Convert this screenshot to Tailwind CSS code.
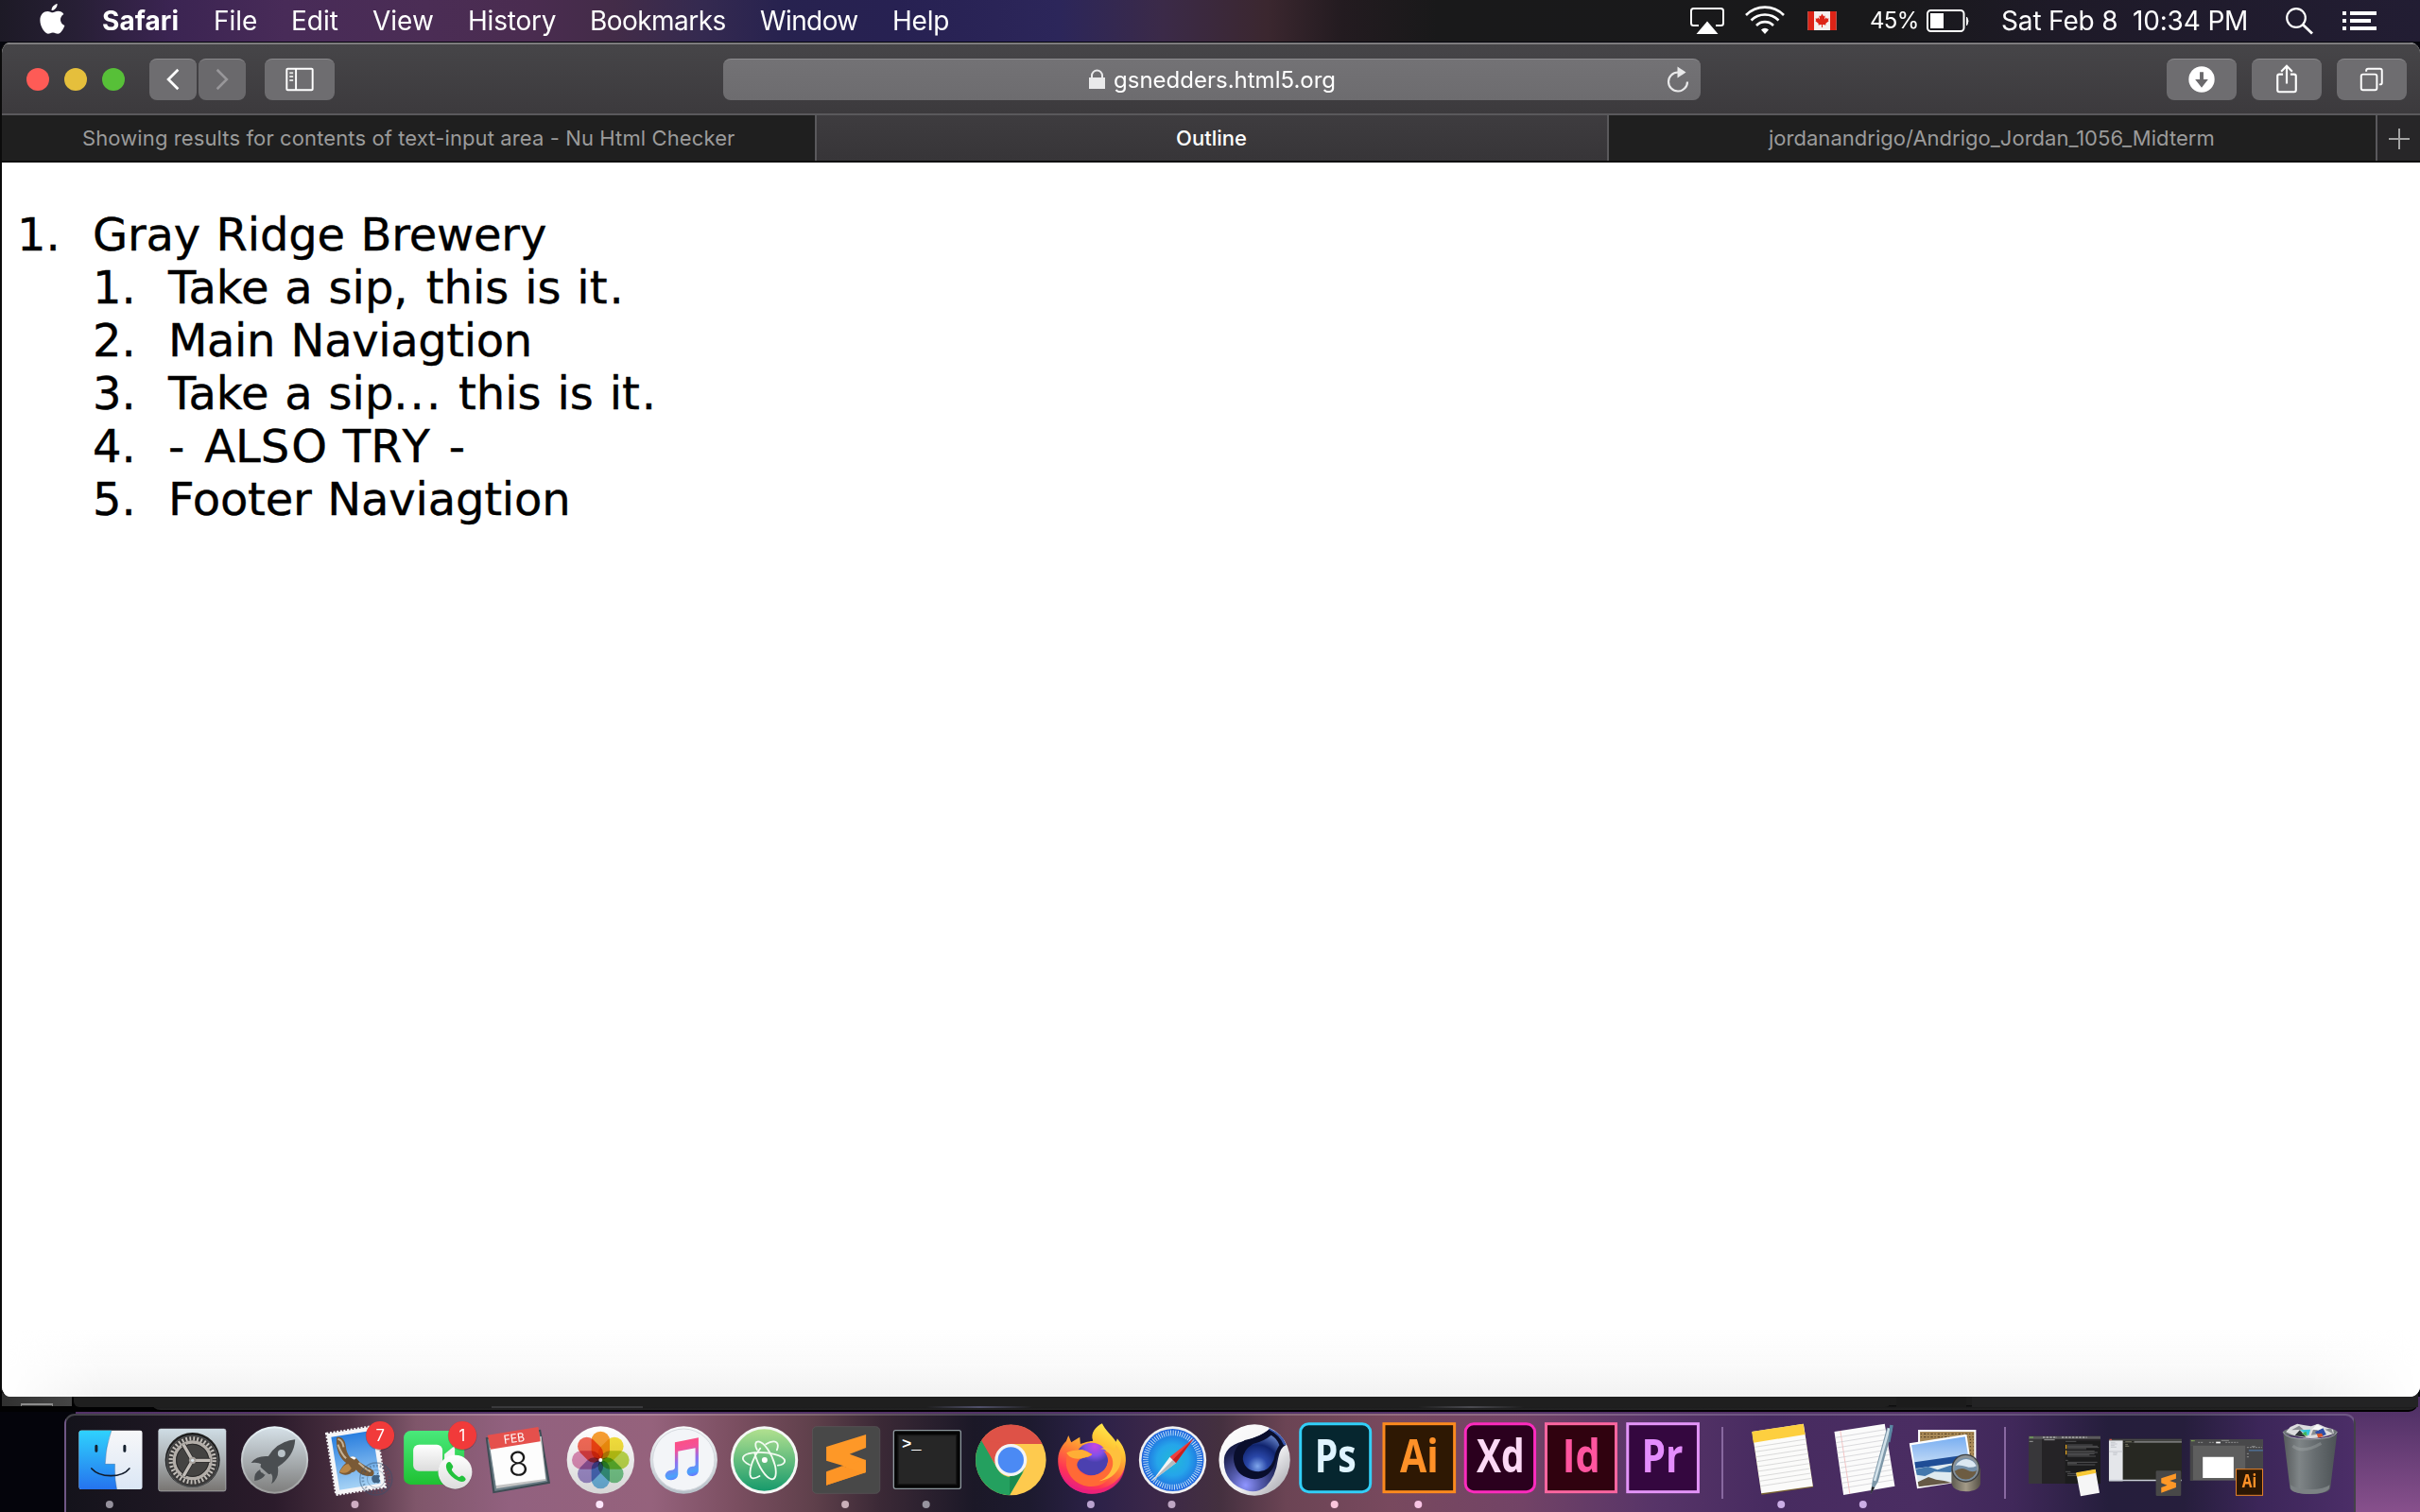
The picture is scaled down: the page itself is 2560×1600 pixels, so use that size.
<!DOCTYPE html>
<html lang="en">
<head>
<meta charset="utf-8">
<title>Outline</title>
<script src="https://cdn.jsdelivr.net/npm/@tailwindcss/browser@4"></script>
</head>
<body class="w-[2560px] h-[1600px] overflow-hidden bg-[#05050c] font-['Inter',sans-serif]">
<div class="relative flex h-[1600px] w-[2560px] flex-col">

  <!-- Menu bar -->
  <header class="flex h-11 shrink-0 items-center whitespace-pre bg-[linear-gradient(90deg,#1d1a26_0px,#271f35_80px,#3b2452_180px,#482b58_300px,#4b2d55_450px,#4a2c50_560px,#432c48_650px,#352a50_740px,#27224f_830px,#272152_950px,#2c265a_1120px,#3b2a48_1230px,#3b272f_1340px,#231b20_1420px,#19191a_1520px,#19191b_2000px,#1e1a28_2180px,#221d33_2560px)] text-[28px] leading-11 text-white">
    <svg class="ml-[42px] h-8 w-[27px] shrink-0 -mt-1" viewBox="0 0 27 32" fill="#fff"><path d="M18.6 0c.3 3.300-2.700 7-6 7.100C12.200 4 15.300.5 18.600 0zM13.800 9.300c1.300 0 3.200-1.500 5.700-1.500 2.300 0 4.600 1.200 5.900 3.100-5.100 3.100-4.200 9.900 1 12-1.300 3.900-4.200 8.800-7.200 8.800-2.100 0-2.800-1.300-5.200-1.300-2.500 0-3.300 1.300-5.200 1.300C5.300 31.700.4 23.800.4 17.500.4 11 4.500 7.900 8.300 7.900c2.400 0 4.200 1.400 5.500 1.400z"/></svg>
    <span class="ml-[39px] w-[118px] font-bold tracking-[0.1px]">Safari</span>
    <span class="w-[82px]">File</span>
    <span class="w-[86px]">Edit</span>
    <span class="w-[101px]">View</span>
    <span class="w-[129px] tracking-[-0.2px]">History</span>
    <span class="w-[180px] tracking-[-0.55px]">Bookmarks</span>
    <span class="w-[140px] tracking-[-0.6px]">Window</span>
    <span class="w-[60px] tracking-[-0.2px]">Help</span>
    <svg class="ml-auto h-11 w-[160px] shrink-0" viewBox="1785 0 160 44">
      <path d="M1797 27h-5.500a2.500 2.500 0 0 1-2.500-2.500v-13a2.500 2.500 0 0 1 2.500-2.500h29a2.500 2.500 0 0 1 2.500 2.500v13a2.500 2.500 0 0 1-2.500 2.500h-5.500" fill="none" stroke="#fff" stroke-width="2"/>
      <path d="M1806 22.500l11.500 13.500h-23z" fill="#fff"/>
      <g fill="none" stroke="#fff" stroke-width="2.600"><path d="M1847 16a28 28 0 0 1 40 0M1852.500 21.500a20.500 20.500 0 0 1 29 0M1858 27a12.500 12.500 0 0 1 18 0"/></g>
      <path d="M1867 36l-4-4.500a5.500 5.500 0 0 1 8 0z" fill="#fff"/>
      <path d="M1912.500 12h30v20h-30z" fill="#f4f0ef"/><path d="M1912.500 12h6.500v20h-6.500zM1936 12h6.500v20h-6.500z" fill="#dd2417"/>
      <path d="M1927.500 14.500l1.600 2.700 1.600-.7-.7 4 1.900-1.900.6 1.100 2.100-.3-.8 2 1 .6-3.600 3.100.4 1.300-3.600-.4v3h-1v-3l-3.600.4.4-1.300-3.600-3.100 1-.6-.8-2 2.100.3.600-1.100 1.900 1.900-.7-4 1.600.7z" fill="#dd2417"/>
    </svg>
    <span class="ml-[33px] w-[59px] text-[24px] tracking-[-0.7px]">45%</span>
    <svg class="h-11 w-[48px] shrink-0" viewBox="2037 0 48 44"><rect x="2039" y="11" width="38.500" height="22" rx="3.500" fill="none" stroke="#fff" stroke-width="2"/><path d="M2042 14h14v16h-14z" fill="#fff"/><path d="M2080.500 18q3 4 0 9z" fill="#fff" stroke="#fff"/></svg>
    <span class="ml-[32px] w-[299px] tracking-[-0.15px]">Sat Feb 8  10:34 PM</span>
    <svg class="mr-[44px] h-11 w-[100px] shrink-0" viewBox="2416 0 100 44"><circle cx="2429" cy="19" r="9.800" fill="none" stroke="#fff" stroke-width="2.200"/><path d="M2436 26l10 9.500" stroke="#fff" stroke-width="2.800"/><path d="M2478 12h4v4h-4zM2478 20h4v4h-4zM2478 28h4v4h-4zM2486 12h28v4h-28zM2486 20h22v4h-22zM2486 28h28v4h-28z" fill="#fff"/></svg>
  </header>

  <!-- Browser window -->
  <section class="relative z-10 mt-px flex h-[1433px] w-[2560px] shrink-0 flex-col overflow-hidden rounded-[11px] border-l-2 border-[#0b0b0b] bg-white">
    <div class="flex h-[77px] shrink-0 items-center border-t-2 border-b-2 border-t-[#7d7c7e] border-b-[#5a595c] bg-linear-to-b from-[#464548] to-[#3c3a3d]">
      <div class="ml-[26px] flex gap-4">
        <i class="size-6 rounded-full bg-[#fe5b56]"></i><i class="size-6 rounded-full bg-[#e5bf3c]"></i><i class="size-6 rounded-full bg-[#57c038]"></i>
      </div>
      <div class="ml-[26px] flex gap-0.5">
        <svg class="h-11 w-[50px] rounded-lg border-t border-[#8a898c] bg-[#6e6d70]" viewBox="0 0 50 44"><path d="M30.500 11L20 21.500 30.500 32" fill="none" stroke="#fff" stroke-width="2.800"/></svg>
        <svg class="h-11 w-[50px] rounded-lg border-t border-[#8a898c] bg-[#6a696c]" viewBox="0 0 50 44"><path d="M19.500 11L30 21.500 19.500 32" fill="none" stroke="#98979a" stroke-width="2.600"/></svg>
      </div>
      <svg class="ml-5 h-11 w-[74px] rounded-lg border-t border-[#8a898c] bg-[#6e6d70]" viewBox="0 0 74 44"><g fill="none" stroke="#fff" stroke-width="2"><rect x="23" y="10" width="28" height="23" rx="1"/><path d="M33 10v23"/></g><path d="M26 14.500h4M26 18.500h4M26 22.500h4" stroke="#ddd" stroke-width="2"/></svg>
      <div class="ml-[411px] flex h-11 w-[1034px] items-center rounded-lg border-t border-[#8c8b8e] bg-linear-to-b from-[#737275] to-[#6d6c6f] text-[24px] text-white">
        <svg class="ml-[387px] h-6 w-[26px]" viewBox="0 0 26 24"><path d="M0 10h17v12H0z" fill="#e9e9ea"/><path d="M3 11V8a5.500 5.500 0 0 1 11 0v3" fill="none" stroke="#e9e9ea" stroke-width="2"/></svg>
        <span class="w-[240px] pt-0.5">gsnedders.html5.org</span>
        <svg class="ml-auto mr-[10px] h-8 w-7" viewBox="0 0 28 32"><path d="M14 8.500A10 10 0 1 0 24 18.500" fill="none" stroke="#e9e9ea" stroke-width="2.200"/><path d="M13.500 2.500v12l9-6z" fill="#e9e9ea"/></svg>
      </div>
      <div class="ml-auto mr-3.5 flex gap-4">
        <svg class="h-11 w-[74px] rounded-lg border-t border-[#8a898c] bg-[#6e6d70]" viewBox="0 0 74 44"><circle cx="37" cy="21.500" r="14" fill="#fff"/><path d="M35 13.500h4v8h5l-7 9-7-9h5z" fill="#6a696c"/></svg>
        <svg class="h-11 w-[74px] rounded-lg border-t border-[#8a898c] bg-[#6e6d70]" viewBox="0 0 74 44"><g fill="none" stroke="#fff" stroke-width="2.200"><path d="M33 16h-4a2 2 0 0 0-2 2v15a2 2 0 0 0 2 2h16a2 2 0 0 0 2-2v-15a2 2 0 0 0-2-2h-4M37 26V7M31 13l6-6 6 6"/></g></svg>
        <svg class="h-11 w-[74px] rounded-lg border-t border-[#8a898c] bg-[#6e6d70]" viewBox="0 0 74 44"><g fill="none" stroke="#fff" stroke-width="2"><rect x="25.500" y="16" width="17" height="17" rx="2"/><path d="M31 13v-1a2 2 0 0 1 2-2h13a2 2 0 0 1 2 2v13a2 2 0 0 1-2 2h-1"/></g></svg>
      </div>
    </div>
    <div class="flex h-[50px] shrink-0 border-b-2 border-[#0c0c0c] text-[22px] text-[#9b9b9b] leading-[48px]">
      <div class="w-[860px] bg-[#1f1f1f] pl-[85px] tracking-[0.11px]">Showing results for contents of text-input area - Nu Html Checker</div>
      <div class="flex w-[840px] justify-center border-x-2 border-[#5a595c] bg-linear-to-b from-[#3e3c3f] to-[#373538] pr-px font-medium text-white">Outline</div>
      <div class="w-[811px] bg-[#1f1f1f] pl-[169px] tracking-[0.02px]">jordanandrigo/Andrigo_Jordan_1056_Midterm</div>
      <svg class="w-[47px] border-l-2 border-[#5a595c] bg-[#272628]" viewBox="0 0 45 48"><path d="M23 14v22M12 25h22" stroke="#a3a3a3" stroke-width="2"/></svg>
    </div>
    <main class="h-[1256px] grow bg-white pt-12 pl-4 font-['DejaVu_Sans',sans-serif] text-[48px] leading-[56px] text-black [word-spacing:1.6px] [-webkit-text-stroke:0.4px_black]">
      <ol>
        <li class="flex"><span class="w-20 shrink-0">1.</span><div><span class="tracking-[-0.2px]">Gray Ridge Brewery</span>
          <ol>
            <li class="flex"><span class="w-20">1.</span><span>Take a sip<span class="tracking-[2.200px]">,</span> this is it<span class="pl-0.5">.</span></span></li>
            <li class="flex"><span class="w-20">2.</span><span class="tracking-[-0.37px]">Main Naviagtion</span></li>
            <li class="flex"><span class="w-20">3.</span><span>Take a sip<span class="tracking-[2px]">...</span> this is it<span class="pl-0.5">.</span></span></li>
            <li class="flex"><span class="w-20">4.</span><span><span class="tracking-[4px]">-</span> AL<span class="tracking-[2px]">S</span>O TR<span class="tracking-[2px]">Y</span> <span class="pl-px">-</span></span></li>
            <li class="flex"><span class="w-20">5.</span><span class="tracking-[-0.18px]">Footer Naviagtion</span></li>
          </ol></div></li>
      </ol>
    </main>
    <div class="absolute inset-x-0 bottom-0 h-[72px] bg-[linear-gradient(180deg,#ffffff00,#fafafa_55%,#f2f2f2)] [mask-image:linear-gradient(90deg,transparent,black_110px,black_2440px,transparent)]"></div>
  </section>

  <!-- Desktop area with the Dock -->
  <footer class="relative h-[122px] bg-[linear-gradient(180deg,#4a2d62,#87508c)]">
    <div class="absolute left-0 -top-3 h-[134px] w-20 bg-[#04040b]"></div>
    <div class="absolute left-0 -top-3 h-7 w-[2480px] bg-[#020203]"></div>
    <div class="absolute left-[160px] -top-3 h-7 w-[2398px] rounded-b-[10px] border-b-2 border-black bg-[linear-gradient(180deg,#1f1f1f_80%,#0c0c0d_82%,#1d1d1e_90%,#262626)]"></div>
    <div class="absolute left-[78px] -top-3 h-[23px] w-[1922px] rounded-b-[6px] bg-[#1f1f1f]"></div>
    <div class="absolute left-[2006px] -top-3 h-[23px] w-[74px] bg-[#1c1c1c]"></div>
    <div class="absolute left-[2086px] -top-3 h-[23px] w-[472px] bg-[#232324]"></div>
    <div class="absolute left-0.5 -top-3 h-[22px] w-[74px] bg-linear-to-r from-[#303030] to-[#454545]"></div>
    <div class="absolute left-[22px] top-[7px] h-[3px] w-[34px] border-x border-t-2 border-[#8b8b8b]"></div>
    <div class="absolute left-[520px] top-[10px] h-0.5 w-40 bg-[#39393c]"></div>
    <div class="absolute left-[980px] top-[10px] h-0.5 w-28 bg-[linear-gradient(90deg,transparent,#50506a,transparent)]"></div>
    <div class="absolute left-[1500px] top-[10px] h-0.5 w-28 bg-[linear-gradient(90deg,transparent,#4a4a50,transparent)]"></div>

    <div class="absolute left-[68px] top-[18px] flex h-[116px] w-[2424px] items-start rounded-[11px] border-2 border-white/20 bg-[linear-gradient(90deg,#14131b_0px,#1d1722_100px,#2b1b2b_220px,#4b3041_300px,#7f566a_370px,#92617f_470px,#95627c_620px,#7a4e60_710px,#5f404b_790px,#3b2936_860px,#1b1827_960px,#1d1a2f_1020px,#2c2148_1090px,#3b2749_1150px,#44303f_1220px,#6b4454_1290px,#78495e_1400px,#724366_1540px,#573468_1680px,#472b60_1800px,#4a2d62_1960px,#40285a_2060px,#251e3c_2160px,#261e3c_2240px,#3c2659_2320px,#4c2e68_2424px)] pl-[4.300px] [&>svg]:-mt-0.5 [&>svg]:h-[104px] [&>svg]:w-[86.4px] [&>svg]:shrink-0">
      <!-- Finder -->
      <svg viewBox="222.400 108 259.200 312">
        <defs><linearGradient id="fb" x2="0" y2="1"><stop stop-color="#2fd2fd"/><stop offset="1" stop-color="#2573ee"/></linearGradient><linearGradient id="fw" x2="0" y2="1"><stop stop-color="#f7f7f9"/><stop offset="1" stop-color="#dbe7f5"/></linearGradient></defs>
        <rect x="251" y="161" width="201" height="187" rx="7" fill="url(#fw)"/><path d="M258 161h96q-19 55-20 107h31q-2 45 6 80H258a7 7 0 0 1-7-7V168a7 7 0 0 1 7-7z" fill="url(#fb)"/>
        <path d="M354 161q-19 55-20 107h31q-2 45 6 80" fill="none" stroke="#1b4f86" stroke-opacity=".5" stroke-width="2"/>
        <path d="M306 211v15M396 211v15" stroke="#14202e" stroke-width="9" stroke-linecap="round"/><path d="M291 282q20 23 61 23t59-23" fill="none" stroke="#111b2a" stroke-width="5" stroke-linecap="round"/>
        <circle cx="348" cy="396" r="12" fill="#95919c"/>
      </svg>
      <!-- System Preferences -->
      <svg viewBox="482 108 259.200 312">
        <defs><linearGradient id="sg" x2="0" y2="1"><stop stop-color="#cfdde5"/><stop offset=".5" stop-color="#a9aeb1"/><stop offset="1" stop-color="#777471"/></linearGradient></defs>
        <rect x="502" y="156" width="214" height="198" rx="7" fill="url(#sg)" stroke="#d5dde0" stroke-width="1.500"/>
        <circle cx="610" cy="255" r="87" fill="#1d1d1d"/><circle cx="610" cy="259" r="82" fill="#3b3a3a" stroke="#b9cad6" stroke-width="2" stroke-opacity=".4"/>
        <circle cx="610" cy="256" r="69" fill="none" stroke="#c4c0bb" stroke-width="13" stroke-dasharray="5.500 6.540"/>
        <circle cx="610" cy="256" r="58" fill="#444342" stroke="#b3aea9" stroke-width="10"/><circle cx="610" cy="256" r="51" fill="none" stroke="#2a2929" stroke-width="3"/>
        <path d="M610 256h56M610 256l-29-50M610 256l-29 50" stroke="#2e2d2d" stroke-width="15"/>
        <path d="M610 256h56M610 256l-29-50M610 256l-29 50" stroke="#c1bcb7" stroke-width="10"/><circle cx="610" cy="256" r="11" fill="#aaa5a0"/><circle cx="610" cy="256" r="5" fill="#d8e2e8"/>
      </svg>
      <!-- Launchpad -->
      <svg viewBox="741.400 108 259.200 312">
        <defs><linearGradient id="lg" x2="0" y2="1"><stop stop-color="#d4dfe6"/><stop offset="1" stop-color="#7f7f7e"/></linearGradient><linearGradient id="lr" x2="0" y2="1"><stop stop-color="#e8f3f8"/><stop offset="1" stop-color="#9b9b9b"/></linearGradient></defs>
        <circle cx="872" cy="255" r="107" fill="url(#lr)"/><circle cx="872" cy="255" r="101" fill="url(#lg)"/>
        <path d="M937 190q-56 5-85 53-38-3-55 21 22-3 32 4-3 7-1 10l24 21q6 2 9-1 8 12 1 33 26-20 20-54 53-34 55-87z" fill="#4a4e51"/><circle cx="894" cy="234" r="12" fill="#b9c3c8"/>
        <path d="M826 285q-20 9-18 36 25-3 35-20-7 1-8-5-9 0-9-11z" fill="#4a4e51"/>
      </svg>
      <!-- Mail -->
      <svg viewBox="1000.600 108 259.200 312">
        <defs><linearGradient id="mg" x2="0" y2="1"><stop stop-color="#2a7fdf"/><stop offset="1" stop-color="#a5d2f5"/></linearGradient></defs>
        <g transform="rotate(-9 1130 255)"><rect x="1052" y="158" width="158" height="196" fill="#f5f5f7"/><rect x="1052" y="158" width="158" height="196" fill="none" stroke="#f5f5f7" stroke-width="8" stroke-dasharray="6 5"/><rect x="1065" y="171" width="132" height="170" fill="url(#mg)"/></g>
        <path d="M1070 183c14-6 27 8 29 28 1 15 6 25 13 35 10-4 20-1 26 10 12 14 30 20 47 31 6 8 4 16-3 19-19 2-39-4-50-20-5 6-9 9-14 8-9 10-28 11-40 1 5-14 15-26 22-31-22-18-33-43-30-81z" fill="#7a5a36"/>
        <path d="M1074 188c9 2 16 12 18 26M1074 206q12 32 26 44M1140 264q18 18 38 28" fill="none" stroke="#c4b296" stroke-width="6"/><path d="M1112 246q12-6 20 3l-6 5z" fill="#fff"/><path d="M1079 293q12-24 28-26l10 14q-14 22-38 12z" fill="#b98748"/>
        <g fill="none" stroke="#34506e" stroke-opacity=".45"><circle cx="1195" cy="315" r="51" stroke-width="4"/><circle cx="1195" cy="315" r="42" stroke-width="8" stroke-dasharray="5 6"/><circle cx="1195" cy="315" r="28" stroke-width="2.500"/></g>
        <path d="M1197 302q1-6 6-7 0 6-6 7zM1195 304c4-2 10-2 13 2-6 4-5 11 1 14-5 10-8 9-14 7-7 3-10 0-13-8-3-11 4-18 13-15z" fill="#2a4866" fill-opacity=".8"/>
        <circle cx="1208" cy="179" r="46" fill="#000" fill-opacity=".2"/><circle cx="1208" cy="177" r="45" fill="#f13a3a"/><text x="1208" y="195" text-anchor="middle" font-family="Inter" font-size="50" fill="#fff">7</text>
        <circle cx="1128" cy="396" r="12" fill="#cfaec3"/>
      </svg>
      <!-- FaceTime -->
      <svg viewBox="59.600 108 259.200 312">
        <defs><linearGradient id="vg" x2="0" y2="1"><stop stop-color="#49e97b"/><stop offset="1" stop-color="#1fc132"/></linearGradient><linearGradient id="vw" x2="0" y2="1"><stop stop-color="#fff"/><stop offset="1" stop-color="#dcdcdc"/></linearGradient></defs>
        <rect x="81" y="162" width="192" height="171" rx="22" fill="url(#vg)"/><rect x="111" y="206" width="93" height="84" rx="18" fill="url(#vw)"/><path d="M210 236l33-27v76l-33-27z" fill="#f5f5f5"/>
        <circle cx="244" cy="295" r="54" fill="#000" fill-opacity=".25"/><circle cx="244" cy="293" r="54" fill="url(#vw)"/>
        <path d="M219 264q7-6 12 1l6 9q2 5-3 9-2 3 1 7 8 11 19 18 4 2 7-1 4-4 9-1l6 6q4 5-1 9-8 6-19 1-27-12-38-35-6-15 1-23z" fill="#23c23c"/>
        <circle cx="267" cy="179" r="46" fill="#000" fill-opacity=".2"/><circle cx="267" cy="177" r="45" fill="#f13a3a"/><text x="266" y="195" text-anchor="middle" font-family="Inter" font-size="50" fill="#fff">1</text>
      </svg>
      <!-- Calendar -->
      <svg viewBox="318.800 108 259.200 312">
        <path d="M342 184l175-26 30 171-182 32z" fill="#3e4c54"/><path d="M348 190l165-24 26 158-168 30z" fill="#6d7f88"/><path d="M356 200l163-20 15 140-158 26z" fill="#c4c4c4"/>
        <path d="M356 216l160-25 16 124-157 21z" fill="#fdfdfd"/><path d="M348 176l161-26 7 46-158 25z" fill="#e5504c"/>
        <g transform="rotate(-8 435 190)"><text x="433" y="199" text-anchor="middle" font-family="Inter" font-size="38" textLength="66" lengthAdjust="spacingAndGlyphs" fill="#fff">FEB</text></g>
        <g transform="rotate(-4 445 265)"><text x="445" y="305" text-anchor="middle" font-family="Inter" font-weight="300" font-size="106" fill="#191919">8</text></g>
      </svg>
      <!-- Photos -->
      <svg viewBox="578 108 259.200 312">
        <defs><linearGradient id="pg" x2="0" y2="1"><stop stop-color="#fff"/><stop offset="1" stop-color="#d6d6d6"/></linearGradient></defs>
        <circle cx="705" cy="255" r="107" fill="url(#pg)"/>
        <g class="[&>rect]:mix-blend-multiply">
          <rect x="676" y="164" width="58" height="91" rx="29" fill="#faa033"/>
          <rect x="676" y="164" width="58" height="91" rx="29" fill="#f6e13c" transform="rotate(45 705 255)"/>
          <rect x="676" y="164" width="58" height="91" rx="29" fill="#bfdb4e" transform="rotate(90 705 255)"/>
          <rect x="676" y="164" width="58" height="91" rx="29" fill="#78cb8c" transform="rotate(135 705 255)"/>
          <rect x="676" y="164" width="58" height="91" rx="29" fill="#72bbe6" transform="rotate(180 705 255)"/>
          <rect x="676" y="164" width="58" height="91" rx="29" fill="#a290cf" transform="rotate(225 705 255)"/>
          <rect x="676" y="164" width="58" height="91" rx="29" fill="#e08fb9" transform="rotate(270 705 255)"/>
          <rect x="676" y="164" width="58" height="91" rx="29" fill="#f46a57" transform="rotate(315 705 255)"/>
        </g><circle cx="705" cy="255" r="6" fill="#fff"/>
        <circle cx="702" cy="396" r="12" fill="#fde6fb"/>
      </svg>
      <!-- Music -->
      <svg viewBox="837.200 108 259.200 312">
        <defs><linearGradient id="ug" x2="0" y2="1"><stop stop-color="#f9fafb"/><stop offset="1" stop-color="#b6bfc7"/></linearGradient><linearGradient id="un" x1=".4" y1="0" x2=".6" y2="1"><stop stop-color="#ff4f7b"/><stop offset=".28" stop-color="#f45398"/><stop offset=".55" stop-color="#8f70ee"/><stop offset=".85" stop-color="#4aa3fb"/><stop offset="1" stop-color="#7a5cff"/></linearGradient></defs>
        <circle cx="970" cy="255" r="107" fill="url(#ug)"/><circle cx="970" cy="254" r="98" fill="#f3f5f8" stroke="#d5d9df" stroke-width="3"/>
        <path d="M942 199l75-15v103q0 16-18 19-19 1-19-14 1-15 18-17 9 0 9-6v-52l-55 10v74q-2 16-22 18-19 0-19-15 2-15 20-17 11-1 11-8z" fill="url(#un)"/>
      </svg>
      <!-- Atom -->
      <svg viewBox="1096.400 108 259.200 312">
        <defs><linearGradient id="ag" x2="0" y2="1"><stop stop-color="#b1e08f"/><stop offset="1" stop-color="#179a6c"/></linearGradient></defs>
        <circle cx="1227" cy="255" r="107" fill="#f5f7f5"/><circle cx="1227" cy="255" r="98" fill="url(#ag)"/>
        <g fill="none" stroke="#f2fbf1" stroke-width="5.500" stroke-linecap="round"><path d="M1180 270c-34-16-24-34 10-38 50-5 100 8 102 26 0 8-10 14-22 14"/><path d="M1204 222c-8-14-6-26 4-26 18 2 42 36 53 76 6 28 2 44-10 44-18-2-44-40-55-84"/><path d="M1232 205c18-12 37-13 38 4 0 6-1 10-3 14M1214 218c-22 26-34 64-32 84 2 14 12 14 30 4"/></g>
        <circle cx="1228" cy="255" r="9" fill="#fff"/>
      </svg>
      <!-- Sublime Text -->
      <svg viewBox="155.700 108 259.200 312">
        <rect x="178" y="149" width="214" height="212" rx="13" fill="#484848" stroke="#5a5a5a" stroke-width="2"/>
        <path d="M222 295l125-33v31l-125 42z" fill="#f08a1c"/><path d="M222 213l126-39v42l-52 20 51 19v40l-125-38z" fill="#fe9827"/><path d="M222 292l50-18 75 21-125 40z" fill="#fd9526"/><path d="M272 274l75-20v40l-10 3z" fill="#fe9827"/>
        <circle cx="282" cy="396" r="12" fill="#c9afb9"/>
      </svg>
      <!-- Terminal -->
      <svg viewBox="414.900 108 259.200 312">
        <rect x="437" y="161" width="213" height="185" rx="6" fill="#050505" stroke="#8d979d" stroke-width="4"/><rect x="451" y="176" width="185" height="156" fill="#262626" stroke="#161616" stroke-width="4"/>
        <text x="463" y="219" font-family="Liberation Mono" font-size="52" font-weight="700" textLength="62" lengthAdjust="spacingAndGlyphs" fill="#fff">&gt;_</text>
        <circle cx="540" cy="396" r="12" fill="#97949f"/>
      </svg>
      <!-- Chrome -->
      <svg viewBox="674.100 108 259.200 312">
        <circle cx="807" cy="255" r="112" fill="#feca4e"/>
        <path d="M710 199A112 112 0 0 1 907 204H807a51 51 0 0 0-48 66z" fill="#de5247"/>
        <path d="M714 193A112 112 0 0 0 803 367l52-88a51 51 0 0 1-88 8z" fill="#24a05f"/>
        <path d="M714 193l54 92 39-81z" fill="#de5247"/><path d="M803 367l49-88-48 25z" fill="#1b8a50"/>
        <circle cx="807" cy="255" r="51" fill="#f4f4f4"/><circle cx="807" cy="255" r="41" fill="#4b8af4"/>
      </svg>
      <!-- Firefox -->
      <svg viewBox="933.300 108 259.200 312">
        <defs><linearGradient id="xg" x1=".8" y1="0" x2=".3" y2="1"><stop stop-color="#fff04f"/><stop offset=".3" stop-color="#ffc233"/><stop offset=".55" stop-color="#ff7a35"/><stop offset=".8" stop-color="#ff3355"/><stop offset="1" stop-color="#e21b8a"/></linearGradient><radialGradient id="xp" cx=".6" cy=".1"><stop stop-color="#c945e2"/><stop offset=".6" stop-color="#8250e8"/><stop offset="1" stop-color="#4b40b0"/></radialGradient></defs>
        <path d="M1098 139c10 22 28 34 44 58l4-10c20 24 28 44 27 70-4 62-50 105-108 105-60 0-105-43-107-101-1-30 10-50 26-66l7-18 9 22 27-17 2 22c20-8 40-10 40-10-10-24 10-46 29-55z" fill="url(#xg)"/>
        <circle cx="1065" cy="252" r="52" fill="url(#xp)"/>
        <path d="M985 232c20-10 34-8 48-10 14 4 24 10 33 15-6 8-22 9-32 13-14 6-18 18-14 29 10 22 36 32 62 22 36-14 46-48 20-76 28 6 43 40 28 72-14 30-40 42-66 42-46 0-76-34-80-70z" fill="#ff6a36"/>
        <path d="M985 232c20-10 34-8 48-10 14 4 24 10 33 15-6 8-22 9-32 13-22 4-42-2-49-18z" fill="#ffae35"/>
        <path d="M1092 220c22-2 42 22 40 48-2 24-20 46-44 54 40-4 70-34 70-72 0-16-5-32-16-44l-5 20q-20-16-45-6z" fill="#ffc13d"/>
        <path d="M962 280c10 44 50 70 98 70 50 0 96-26 110-72-6 50-50 84-105 84-54 0-96-34-103-82z" fill="#e91f7e" fill-opacity=".75"/>
        <circle cx="1062" cy="396" r="12" fill="#b9a2cf"/>
      </svg>
      <!-- Safari -->
      <svg viewBox="-7.500 108 259.200 312">
        <defs><radialGradient id="cg"><stop stop-color="#22b9d8"/><stop offset=".5" stop-color="#25a5ea"/><stop offset="1" stop-color="#1d62dc"/></radialGradient></defs>
        <circle cx="123" cy="255" r="107" fill="#f0f0f0"/><circle cx="123" cy="255" r="99" fill="url(#cg)"/><circle cx="123" cy="255" r="86" fill="none" stroke="#d9ecfb" stroke-width="17" stroke-dasharray="2.500 5.005"/>
        <path d="M190 186l-76 59 19 20z" fill="#ee3f3f"/><path d="M190 186l-67 69 10 10z" fill="#c8201f"/><path d="M58 322l56-77 19 20z" fill="#f4f4f4"/><path d="M58 322l65-67 10 10z" fill="#b4b9be"/>
        <circle cx="120" cy="396" r="12" fill="#bfa7c4"/>
      </svg>
      <!-- Cinema 4D -->
      <svg viewBox="251.700 108 259.200 312">
        <defs><linearGradient id="dw" x2="1" y2="1"><stop stop-color="#fff"/><stop offset=".6" stop-color="#f0f0f2"/><stop offset="1" stop-color="#9a9aa2"/></linearGradient><radialGradient id="di" cx=".35" cy=".9" r=".8"><stop stop-color="#8f95ff"/><stop offset=".3" stop-color="#555cae"/><stop offset=".7" stop-color="#1b2150"/><stop offset="1" stop-color="#0e1434"/></radialGradient><radialGradient id="db" cx=".4" cy=".85" r=".9"><stop stop-color="#7fa6ec"/><stop offset=".3" stop-color="#2a47a8"/><stop offset=".65" stop-color="#10246e"/><stop offset="1" stop-color="#5d7ac0"/></radialGradient></defs>
        <circle cx="381" cy="255" r="113" fill="url(#dw)"/><path d="M284 262q-2-50 60-66 66-20 84-40 40 22 52 52-17 6-24 42-8 60-38 88-30 24-62 14-70-22-72-90z" fill="url(#di)"/>
        <path d="M316 262q-8-44 34-70 50-10 78-34 36 20 46 50-18 16-26 52-16 52-66 56-56-4-66-54z" fill="#090e2c"/><path d="M426 158q36 18 48 50l8-2q-14-34-54-52z" fill="#3c58b0"/>
        <path d="M344 252q0-28 32-48 34-8 58-28 20 12 26 32-12 16-18 46-14 36-48 38-44-2-50-40z" fill="url(#db)"/>
      </svg>
      <!-- Photoshop -->
      <svg viewBox="510.900 108 259.200 312"><rect x="528" y="140" width="222" height="216" rx="26" fill="#06262f" stroke="#31cff8" stroke-width="9"/><text x="573" y="295" font-family="Open Sans" font-weight="700" font-size="146" textLength="132" lengthAdjust="spacingAndGlyphs" fill="#dff4ff">Ps</text><circle cx="636" cy="396" r="12" fill="#fbc6dc"/></svg>
      <!-- Illustrator -->
      <svg viewBox="770.100 108 259.200 312"><rect x="791" y="140" width="224" height="216" fill="#2e1803" stroke="#fb8a1e" stroke-width="9"/><text x="842" y="294" font-family="Open Sans" font-weight="700" font-size="146" textLength="122" lengthAdjust="spacingAndGlyphs" fill="#ff9128">Ai</text><circle cx="900" cy="396" r="12" fill="#f8c4e4"/></svg>
      <!-- XD -->
      <svg viewBox="1029.300 108 259.200 312"><rect x="1051" y="140" width="220" height="216" rx="26" fill="#2b001e" stroke="#fb2bbd" stroke-width="9"/><text x="1086" y="295" font-family="Open Sans" font-weight="700" font-size="146" textLength="152" lengthAdjust="spacingAndGlyphs" fill="#fdd9f5">Xd</text></svg>
      <!-- InDesign -->
      <svg viewBox="88.500 108 259.200 312"><rect x="108" y="140" width="222" height="216" fill="#30020f" stroke="#fb66a0" stroke-width="9"/><text x="160" y="293" font-family="Open Sans" font-weight="700" font-size="146" textLength="120" lengthAdjust="spacingAndGlyphs" fill="#ff559f">Id</text></svg>
      <!-- Premiere Pro -->
      <svg viewBox="347.700 108 259.200 312"><rect x="365" y="140" width="224" height="216" fill="#34073f" stroke="#e394f8" stroke-width="9"/><text x="409" y="293" font-family="Open Sans" font-weight="700" font-size="146" textLength="132" lengthAdjust="spacingAndGlyphs" fill="#e48dfd">Pr</text></svg>

      <i class="mx-[19px] mt-3 h-[76px] w-0.5 shrink-0 bg-[#8868a0]"></i>

      <!-- Notes -->
      <svg viewBox="725.400 108 259.200 312">
        <path d="M760 167l163-26 31 200-164 24z" fill="#7a6330"/><path d="M760 165l163-25 30 198-164 23z" fill="#fbfbfa"/><path d="M759 165l163-25 6 34-164 26z" fill="#fdcf3f"/>
        <g stroke="#c9c9c9" stroke-width="2"><path d="M768 214l163-25M770 229l163-25M773 245l162-25M775 260l162-25M777 276l162-25M779 291l163-25M782 307l162-25M784 322l162-25M786 338l163-25"/></g>
        <circle cx="852" cy="396" r="12" fill="#cbaee6"/>
      </svg>
      <!-- TextEdit -->
      <svg viewBox="984.600 108 259.200 312">
        <path d="M1019 165l160-25 32 198-163 28z" fill="#fbfbfb"/><path d="M1038 162l30 200" stroke="#f5a9a9" stroke-width="2"/>
        <g stroke="#c9c9cd" stroke-width="2"><path d="M1022 184l160-26M1024 200l160-26M1027 216l160-26M1029 232l160-26M1032 248l160-26M1034 264l160-26M1037 280l160-26M1039 296l160-26M1042 312l160-26M1044 328l160-26M1047 344l160-26"/></g>
        <path d="M1134 364l6-44 46-168 18 3-46 168z" fill="#7d97a8"/><path d="M1143 320l46-166 7 1-45 167z" fill="#d3e2ea"/><path d="M1134 364l4-24 9 2z" fill="#222"/><path d="M1195 143l11 2-10 54-4-1z" fill="#5b87a3"/>
        <circle cx="1110" cy="396" r="12" fill="#cbaee6"/>
      </svg>
      <!-- Preview -->
      <svg viewBox="1243.800 108 259.200 312">
        <defs><linearGradient id="sky" x2="0" y2="1"><stop stop-color="#78aef2"/><stop offset="1" stop-color="#c5dcf5"/></linearGradient><linearGradient id="lp" x2="1" y2="0"><stop stop-color="#5d5a50"/><stop offset=".5" stop-color="#a39b88"/><stop offset="1" stop-color="#565147"/></linearGradient></defs>
        <rect x="1286" y="159" width="184" height="150" fill="#fff"/><rect x="1292" y="165" width="172" height="140" fill="#a98a57"/><path d="M1294 172h168M1294 182h168M1450 190h12M1450 200h12M1450 212h12M1450 224h12M1450 236h12" stroke="#5f482a" stroke-width="4" stroke-dasharray="4 6 7 5"/>
        <path d="M1258 202l182-29 22 145-179 28z" fill="#fff"/><path d="M1265 208l170-27 12 72-172 18z" fill="url(#sky)"/><path d="M1275 262l168-24 5 34-170 12z" fill="#1f4d96"/><path d="M1278 282l170-24 8 54-169 27z" fill="#dfeaf0"/><path d="M1278 284l40-8 30 10 40-14 40 6-40 16-50-2-30 14-26-4z" fill="#4478ad"/><path d="M1285 325l34-16 24 8 26 4 24 6-105 13z" fill="#665946"/>
        <path d="M1392 284v46q6 24 46 25 42-2 46-26v-48z" fill="url(#lp)"/><circle cx="1437" cy="281" r="45" fill="#3c3f42"/><circle cx="1437" cy="281" r="41" fill="#8d9498"/><circle cx="1437" cy="284" r="36" fill="#7590a9"/><path d="M1402 290q20-14 38-4t32 2a36 36 0 0 1-70 2z" fill="#6d5c42"/><path d="M1405 272q14-20 34-20 24 2 32 22-16 8-32 2t-34-4z" fill="#dce8f2"/>
      </svg>

      <i class="mx-[18.700px] mt-3 h-[76px] w-0.5 shrink-0 bg-[#8868a0]"></i>

      <!-- Minimised Notes window -->
      <svg viewBox="180 108 259.200 312">
        <rect x="195" y="179" width="228" height="151" fill="#252326"/><path d="M195 186h42v144h-42z" fill="#38373a"/><path d="M311 195h112v135H311z" fill="#1c1c1d"/><path d="M195 179h228v9H195z" fill="#5b5a5d"/>
        <path d="M199 183h10" stroke="#7fc05a" stroke-width="4" stroke-dasharray="3 1"/><path d="M240 183h45M300 183h80" stroke="#aaa" stroke-width="4" stroke-dasharray="7 4"/><path d="M244 191h34M197 196h12" stroke="#999" stroke-width="3"/>
        <path d="M314 206v14M314 224v14" stroke="#e3a728" stroke-width="4"/>
        <g stroke="#6e6e70" stroke-width="2"><path d="M312 196h34M318 207h80M318 211h96M318 215h100M318 219h60M318 227h86M318 231h96M318 235h86M318 239h70M318 243h90M312 256h8M318 262h95M318 266h30M318 270h88M312 292h16M318 298h34M318 304h36"/></g>
        <path d="M346 297l61-12 13 74-60 11z" fill="#f6f6f6"/><path d="M346 295l61-11 2 12-61 12z" fill="#f9c934"/>
      </svg>
      <!-- Minimised Sublime window -->
      <svg viewBox="439.200 108 259.200 312">
        <rect x="451" y="188" width="231" height="134" fill="#272822"/><path d="M451 188h231v5H451z" fill="#4a4a4a"/><path d="M495 194h187v6H495z" fill="#777"/><path d="M495 194h36v6h-36z" fill="#272822"/><path d="M451 193h44v129h-44z" fill="#e4e6ea"/><path d="M451 317h231v5H451z" fill="#c9ced8"/>
        <path d="M457 199h14M457 204h20M457 209h12M457 214h18M451 228h44M464 233h14M464 238h12" stroke="#b5b9c0" stroke-width="2"/><path d="M503 197h20M503 206h8M503 211h12" stroke="#9a9a80" stroke-width="2"/><path d="M453 190h7" stroke="#f15c56" stroke-width="3"/>
        <rect x="600" y="289" width="80" height="80" rx="4" fill="#484848"/><path d="M617 313l47-15v16l-20 7 20 7v14l-47 17v-17l19-7-19-7z" fill="#fe9827"/>
      </svg>
      <!-- Minimised Illustrator window -->
      <svg viewBox="698.400 108 259.200 312">
        <rect x="710" y="189" width="231" height="131" fill="#5e5e5e"/><path d="M710 189h231v20H710z" fill="#48484a"/><path d="M885 209h56v111h-56zM710 209h9v111h-9z" fill="#464648"/><path d="M896 222h45v5h-45z" fill="#4d6a8c"/><path d="M713 194h12" stroke="#8ab558" stroke-width="4" stroke-dasharray="3 1"/><path d="M735 199h15M770 199h18M822 199h40M890 215h48M890 235h6M890 245h6" stroke="#909090" stroke-width="3" stroke-dasharray="6 3"/><path d="M792 197h14v5h-14z" fill="#fff"/><path d="M809 193h24M905 212h12" stroke="#aaa" stroke-width="2"/>
        <path d="M750 245h98v67h-98z" fill="#fff"/><rect x="856" y="284" width="84" height="83" fill="#2b1704" stroke="#e9842a" stroke-width="3"/><text x="875" y="342" font-family="Open Sans" font-weight="700" font-size="56" textLength="46" lengthAdjust="spacingAndGlyphs" fill="#ff9128">Ai</text>
      </svg>
      <!-- Trash -->
      <svg viewBox="957.600 108 259.200 312">
        <defs><linearGradient id="tg"><stop stop-color="#55595b"/><stop offset=".3" stop-color="#7f8587"/><stop offset=".6" stop-color="#666c6f"/><stop offset="1" stop-color="#4c5255"/></linearGradient></defs>
        <ellipse cx="1089" cy="166" rx="86" ry="16" fill="#6f7577"/><path d="M1012 166l14-16 22-10 20 4 24 4 22-8 22 10 26 8 2 12q-80 34-152-4z" fill="#dcdcde"/>
        <path d="M1030 160l24-14 14 12zM1092 176l10-26 22 22zM1136 158l20-4 6 18z" fill="#8a8d92"/><path d="M1040 178l16-18 20 22z" fill="#30343a"/><path d="M1056 160l34-2-6 20z" fill="#35c6da"/><path d="M1062 172l14-8 4 16z" fill="#46b457"/><path d="M1104 166l26-12 10 20-20 8z" fill="#2f4da6"/><path d="M1110 172l16-2 4 10-16 4z" fill="#d9572b"/><path d="M1094 158l16-16 20 10-14 8z" fill="#f7f7f7"/>
        <path d="M1003 166q6 22 86 23 78-1 86-23l-22 178q-6 18-64 19-58-1-64-19z" fill="url(#tg)"/><path d="M1003 166q6 22 86 23 78-1 86-23" fill="none" stroke="#a4aaac" stroke-width="3"/>
        <path d="M1034 210q30 26 90-8" fill="none" stroke="#a8aeb0" stroke-opacity=".35" stroke-width="10"/><path d="M1027 334q16 14 62 14t62-14l-2 12q-10 16-60 17-54-1-62-18z" fill="#7c8284"/>
      </svg>
    </div>
  </footer>
</div>
</body>
</html>
